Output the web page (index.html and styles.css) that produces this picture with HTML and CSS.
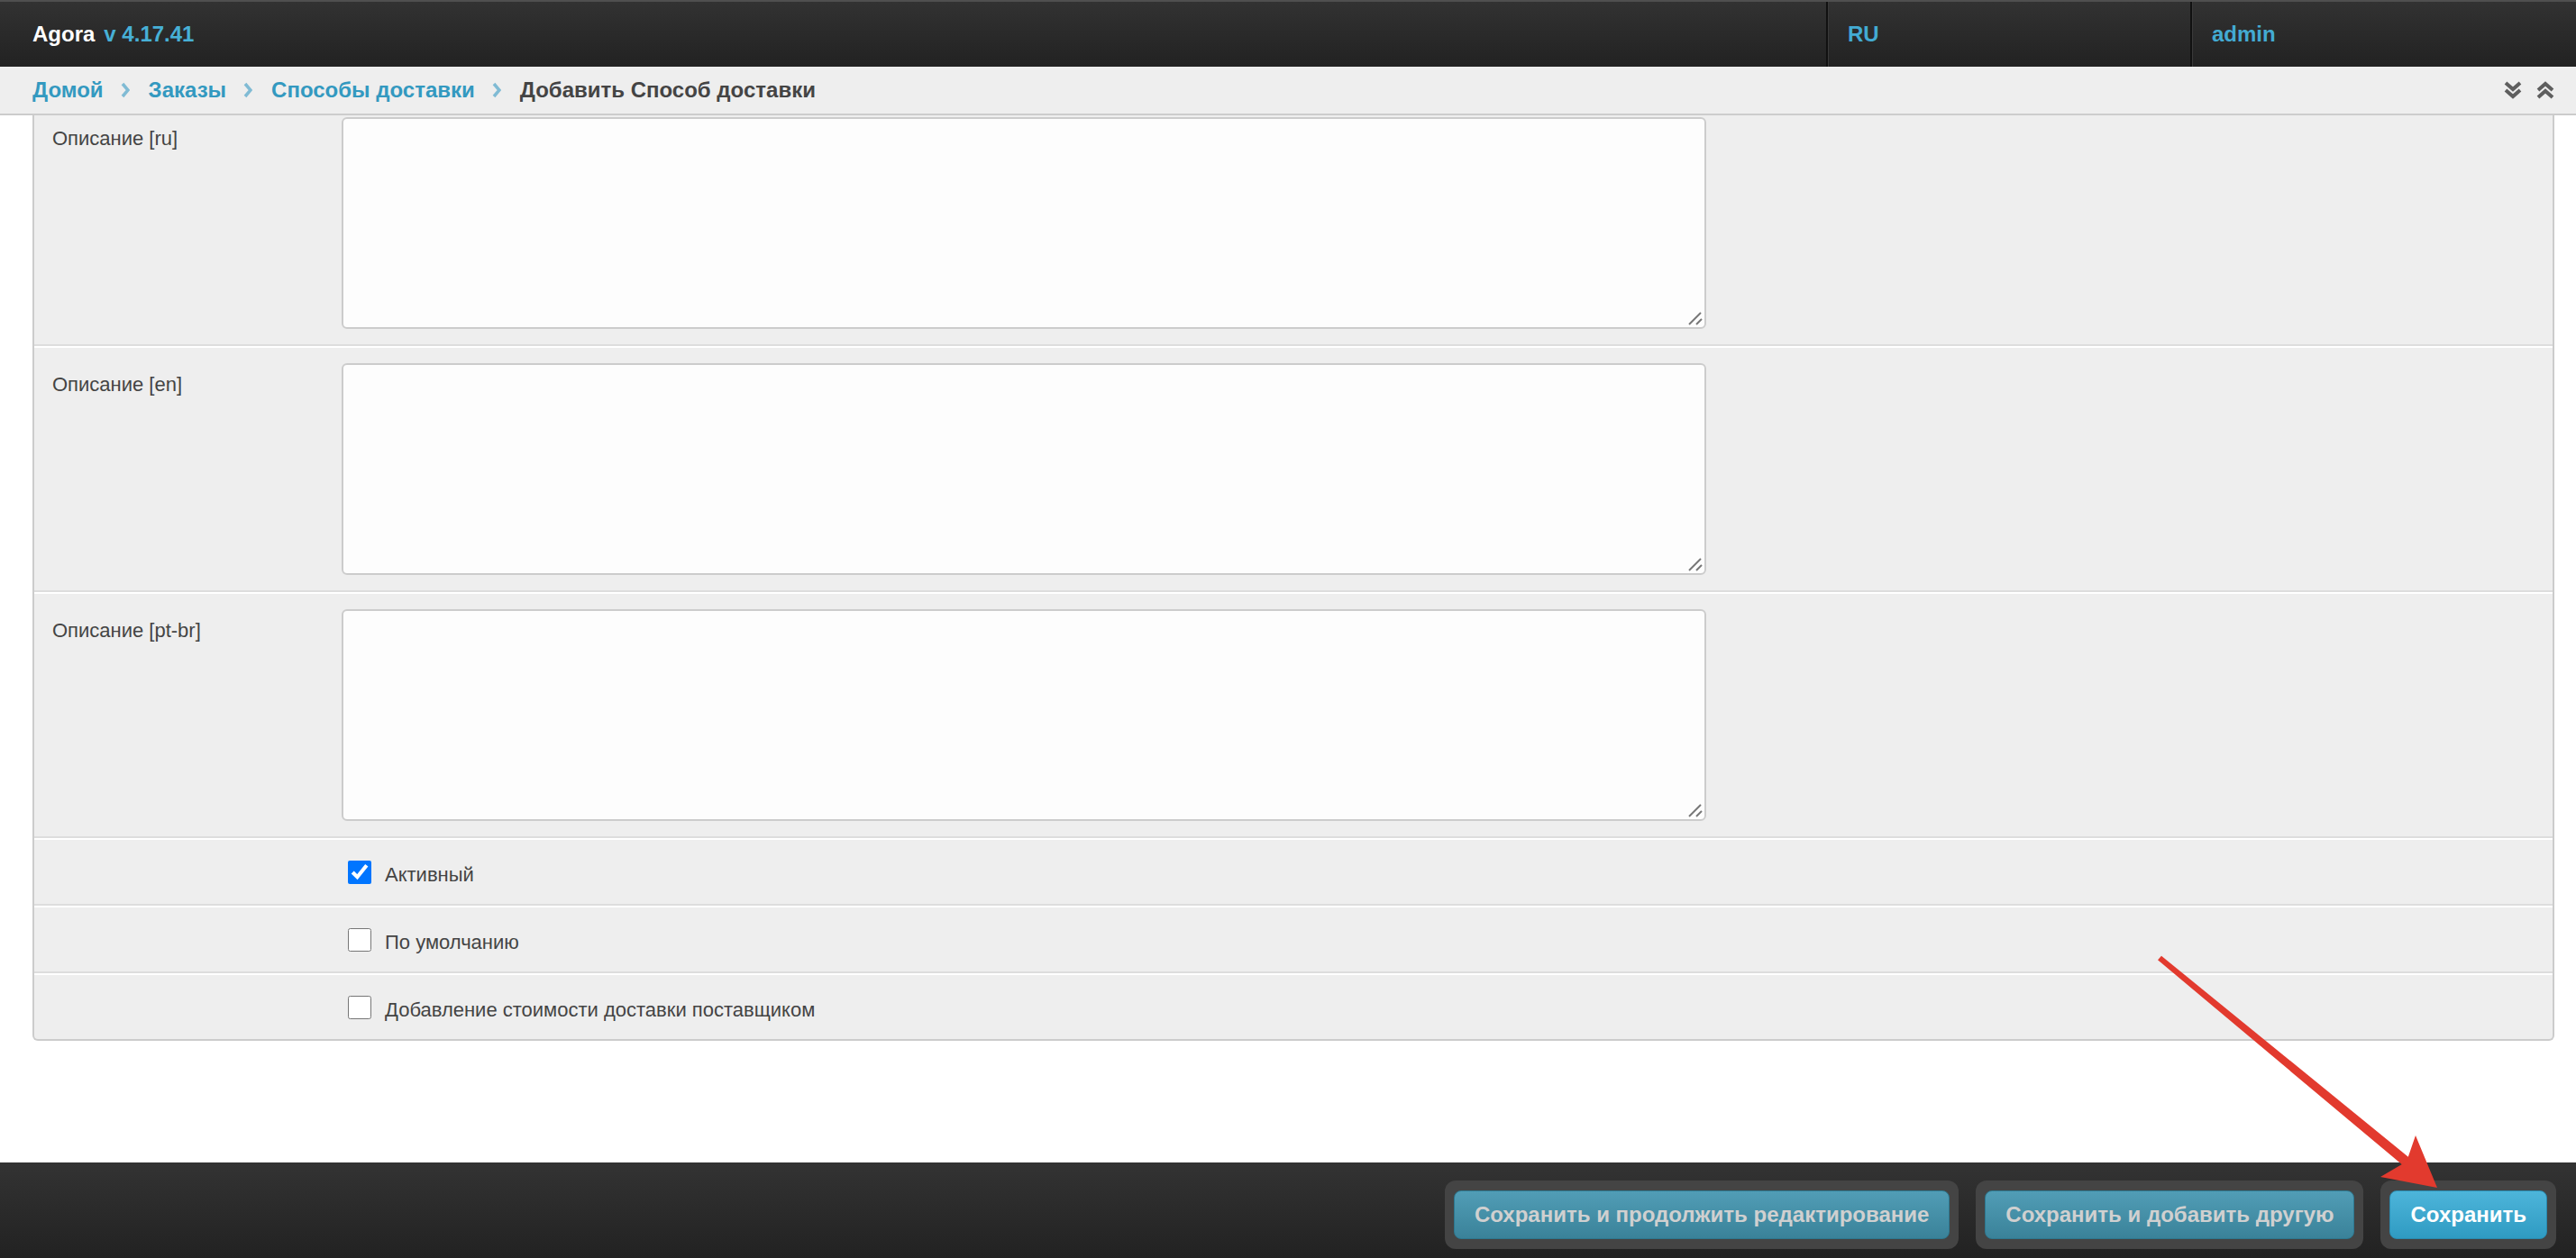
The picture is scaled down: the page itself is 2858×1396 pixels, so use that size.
FILE: index.html
```html
<!DOCTYPE html>
<html lang="ru">
<head>
  <meta charset="UTF-8" />
  <meta name="viewport" content="width=device-width, initial-scale=1.0" />
  <title>Добавить Способ доставки | Agora</title>
  <link rel="stylesheet" href="styles.css">
</head>
<body>

  <!-- top bar -->
  <header class="topbar">
    <div class="brand">Agora<span class="version">v 4.17.41</span></div>
    <div class="top-cell lang"><a href="#">RU</a></div>
    <div class="top-cell user"><a href="#">admin</a></div>
  </header>

  <!-- breadcrumbs -->
  <nav class="crumbs">
    <a href="#">Домой</a>
    <span class="sep"><svg width="10" height="18" viewBox="0 0 10 18"><polyline points="2,2 8,9 2,16" /></svg></span>
    <a href="#">Заказы</a>
    <span class="sep"><svg width="10" height="18" viewBox="0 0 10 18"><polyline points="2,2 8,9 2,16" /></svg></span>
    <a href="#">Способы доставки</a>
    <span class="sep"><svg width="10" height="18" viewBox="0 0 10 18"><polyline points="2,2 8,9 2,16" /></svg></span>
    <span class="current">Добавить Способ доставки</span>
    <div class="crumb-tools">
      <svg width="22" height="22" viewBox="0 0 22 22"><polyline points="3,3 11,10 19,3" /><polyline points="3,11 11,18 19,11" /></svg>
      <svg width="22" height="22" viewBox="0 0 22 22"><polyline points="3,11 11,4 19,11" /><polyline points="3,19 11,12 19,19" /></svg>
    </div>
  </nav>

  <main class="content">
    <div class="module">

      <div class="form-row first">
        <label class="field-label">Описание [ru]</label>
        <div class="field">
          <textarea name="description_ru"></textarea>
          <svg class="grip" width="18" height="18" viewBox="0 0 18 18"><line x1="2" y1="16" x2="15" y2="3" /><line x1="10" y1="16" x2="16" y2="10" /></svg>
        </div>
      </div>

      <div class="form-row">
        <label class="field-label">Описание [en]</label>
        <div class="field">
          <textarea name="description_en"></textarea>
          <svg class="grip" width="18" height="18" viewBox="0 0 18 18"><line x1="2" y1="16" x2="15" y2="3" /><line x1="10" y1="16" x2="16" y2="10" /></svg>
        </div>
      </div>

      <div class="form-row">
        <label class="field-label">Описание [pt-br]</label>
        <div class="field">
          <textarea name="description_pt_br"></textarea>
          <svg class="grip" width="18" height="18" viewBox="0 0 18 18"><line x1="2" y1="16" x2="15" y2="3" /><line x1="10" y1="16" x2="16" y2="10" /></svg>
        </div>
      </div>

      <div class="form-row check-row">
        <div class="field-label"></div>
        <label class="check"><input type="checkbox" name="is_active" checked /><span>Активный</span></label>
      </div>

      <div class="form-row check-row">
        <div class="field-label"></div>
        <label class="check"><input type="checkbox" name="is_default" /><span>По умолчанию</span></label>
      </div>

      <div class="form-row check-row last">
        <div class="field-label"></div>
        <label class="check"><input type="checkbox" name="vendor_cost" /><span>Добавление стоимости доставки поставщиком</span></label>
      </div>

    </div>
  </main>

  <footer class="submit-row">
    <div class="btn-wrap"><button type="submit" class="btn">Сохранить и продолжить редактирование</button></div>
    <div class="btn-wrap"><button type="submit" class="btn">Сохранить и добавить другую</button></div>
    <div class="btn-wrap"><button type="submit" class="btn primary">Сохранить</button></div>
  </footer>

  <!-- red annotation arrow -->
  <svg class="annotation" width="2858" height="1396" viewBox="0 0 2858 1396">
    <polygon points="2394,1065.3 2398,1060.7 2675.5,1286.7 2668.5,1295.3" />
    <polygon points="2704,1318 2641,1306 2670,1289 2680,1260" />
  </svg>

</body>
</html>
```

FILE: styles.css
```css
* {
  box-sizing: border-box;
}

html, body {
  margin: 0;
  height: 100%;
}

body {
  font-family: "Liberation Sans", Arial, sans-serif;
  background: #fff;
  color: #444;
  display: flex;
  flex-direction: column;
  position: relative;
  overflow: hidden;
}

a {
  text-decoration: none;
}

/* top bar */
.topbar {
  display: flex;
  height: 74px;
  border-top: 2px solid #4f4f4f;
  background: linear-gradient(#323232, #222);
  font-size: 24px;
  font-weight: bold;
}

.brand {
  flex: 1;
  display: flex;
  align-items: center;
  padding-left: 36px;
  color: #fff;
}

.version {
  color: #47b0d6;
  margin-left: 10px;
}

.top-cell {
  display: flex;
  align-items: center;
  padding-left: 22px;
  border-left: 2px solid #111;
  box-shadow: inset 1px 0 0 #3a3a3a;
}

.top-cell a {
  color: #43abd3;
}

.lang {
  width: 404px;
}

.user {
  width: 428px;
}

/* breadcrumbs */
.crumbs {
  display: flex;
  align-items: center;
  height: 54px;
  padding: 0 23px 0 36px;
  background: #eee;
  border-bottom: 2px solid #ccc;
  font-size: 24px;
  font-weight: bold;
}

.crumbs a {
  color: #3399c0;
}

.sep {
  display: flex;
  margin: 0 21px 0 19px;
}

.sep polyline {
  fill: none;
  stroke: #80bbd4;
  stroke-width: 3.5;
}

.current {
  color: #444;
}

.crumb-tools {
  margin-left: auto;
  display: flex;
  gap: 14px;
}

.crumb-tools polyline {
  fill: none;
  stroke: #5e5e5e;
  stroke-width: 4;
}

/* form */
.content {
  flex: 1;
}

.module {
  margin: 0 24px 0 36px;
  background: #eee;
  border: 2px solid #ccc;
  border-top: none;
  border-radius: 0 0 6px 6px;
}

.form-row {
  display: flex;
  align-items: flex-start;
  padding: 17px 0;
  border-top: 2px solid #fff;
  border-bottom: 2px solid #ddd;
}

.form-row.first {
  border-top: none;
  padding-top: 2px;
}

.form-row.last {
  border-bottom: none;
}

.field-label {
  flex: 0 0 341px;
  padding: 9px 0 0 20px;
  font-size: 22px;
  line-height: 30px;
  color: #444;
}

.field {
  position: relative;
  width: 1514px;
}

.field textarea {
  display: block;
  width: 100%;
  height: 235px;
  margin: 0;
  background: #fdfdfd;
  border: 2px solid #ccc;
  border-radius: 6px;
  resize: none;
  font-family: inherit;
}

.grip {
  position: absolute;
  right: 3px;
  bottom: 3px;
}

.grip line {
  stroke: #777;
  stroke-width: 2;
}

.check-row {
  height: 75px;
  padding: 0;
  align-items: center;
}

.check-row.last {
  height: 73px;
}

.check-row .field-label {
  padding: 0;
}

.check {
  display: flex;
  align-items: center;
  font-size: 22px;
  color: #444;
}

.check span {
  padding-top: 6px;
}

.check input {
  width: 26px;
  height: 26px;
  margin: 0 15px 0 7px;
}

/* bottom submit bar */
.submit-row {
  height: 106px;
  display: flex;
  justify-content: flex-end;
  align-items: flex-start;
  gap: 19px;
  padding: 20px 22px 0 0;
  background: linear-gradient(#333, #222);
}

.btn-wrap {
  background: #444;
  border-radius: 12px;
  padding: 11px 10px;
}

.btn {
  display: block;
  height: 54px;
  padding: 0 22px;
  border: 1px solid #2d7890;
  border-radius: 8px;
  background: linear-gradient(#519db6, #3a8299);
  color: #d0d0d0;
  font-family: inherit;
  font-size: 24px;
  font-weight: bold;
  cursor: pointer;
}

.btn.primary {
  background: linear-gradient(#4db5da, #2f9bc2);
  border-color: #2a8bb0;
  color: #fff;
}

.annotation {
  position: absolute;
  top: 0;
  left: 0;
  pointer-events: none;
}

.annotation polygon {
  fill: #e23a2e;
}
```
